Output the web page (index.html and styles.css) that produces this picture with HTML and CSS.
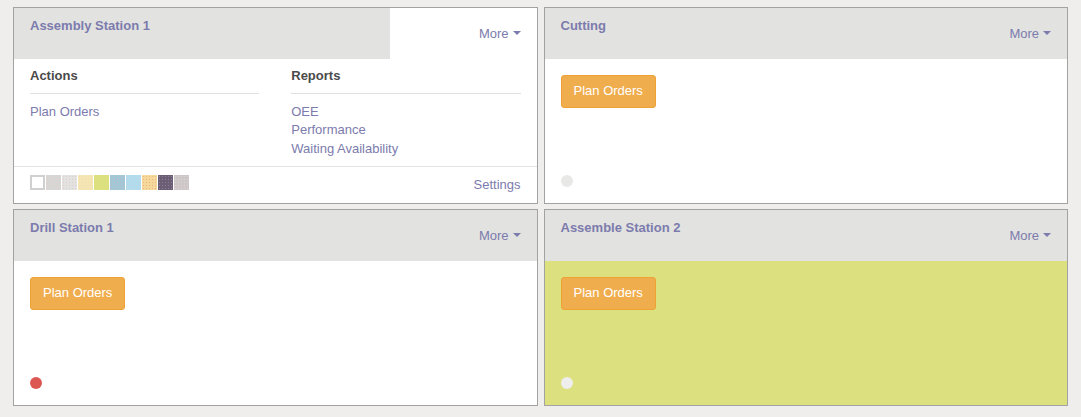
FILE: index.html
```html
<!DOCTYPE html>
<html lang="en">

<head>
    <meta charset="UTF-8">
    <meta name="viewport" content="width=device-width, initial-scale=1.0">
    <title>Manufacturing Dashboard</title>
    <link rel="stylesheet" href="styles.css">
</head>

<body>
    <main class="dashboard">
        <div class="card card-open">
            <div class="card-header">
                <div class="card-title">Assembly Station 1</div>
                <a class="more-toggle">More<span class="caret"></span></a>
            </div>
            <div class="manage-pane">
                <div class="manage-section">
                    <div class="manage-title">Actions</div>
                    <a>Plan Orders</a>
                </div>
                <div class="manage-section">
                    <div class="manage-title">Reports</div>
                    <a>OEE</a>
                    <a>Performance</a>
                    <a>Waiting Availability</a>
                </div>
            </div>
            <div class="manage-footer">
                <ul class="colorpicker">
                    <li class="color-0"></li>
                    <li class="color-1"></li>
                    <li class="color-2"></li>
                    <li class="color-3"></li>
                    <li class="color-4"></li>
                    <li class="color-5"></li>
                    <li class="color-6"></li>
                    <li class="color-7"></li>
                    <li class="color-8"></li>
                    <li class="color-9"></li>
                </ul>
                <a class="settings-link">Settings</a>
            </div>
        </div>

        <div class="card">
            <div class="card-header">
                <div class="card-title">Cutting</div>
                <a class="more-toggle">More<span class="caret"></span></a>
            </div>
            <div class="card-body">
                <button class="btn-plan">Plan Orders</button>
                <span class="status-dot"></span>
            </div>
        </div>

        <div class="card">
            <div class="card-header">
                <div class="card-title">Drill Station 1</div>
                <a class="more-toggle">More<span class="caret"></span></a>
            </div>
            <div class="card-body">
                <button class="btn-plan">Plan Orders</button>
                <span class="status-dot blocked"></span>
            </div>
        </div>

        <div class="card card-yellow">
            <div class="card-header">
                <div class="card-title">Assemble Station 2</div>
                <a class="more-toggle">More<span class="caret"></span></a>
            </div>
            <div class="card-body">
                <button class="btn-plan">Plan Orders</button>
                <span class="status-dot"></span>
            </div>
        </div>
    </main>
</body>

</html>
```

FILE: styles.css
```css
body,
ul {
    margin: 0px;
    padding: 0px;
}

body {
    background: #efeeec;
    font-family: 'Liberation Sans', Arial, Helvetica, sans-serif;
    font-size: 13px;
    line-height: 1.42857;
    color: #4c4c4c;
}

a {
    color: #7c7bad;
    cursor: pointer;
}

.dashboard {
    display: grid;
    grid-template-columns: 1fr 1fr;
    gap: 5px 6px;
    padding: 7px 13px;
}

.card {
    height: 197px;
    box-sizing: border-box;
    border: 1px solid #a2a2a2;
    background: #fff;
    display: flex;
    flex-direction: column;
}

.card-header {
    display: flex;
    height: 51px;
    flex-shrink: 0;
    background: #e2e2e0;
}

.card-title {
    flex: 1;
    padding: 9px 16px 0px;
    font-weight: bold;
    color: #7c7bad;
}

.more-toggle {
    width: 147px;
    box-sizing: border-box;
    padding: 17px 16px 0px;
    text-align: right;
}

.card-open .more-toggle {
    background: #fff;
}

.caret {
    display: inline-block;
    margin-left: 4px;
    vertical-align: 3px;
    border-top: 4px solid;
    border-left: 4px solid transparent;
    border-right: 4px solid transparent;
}

.card-body {
    flex: 1;
    padding: 16px;
    display: flex;
    flex-direction: column;
    align-items: flex-start;
}

.card-yellow .card-body {
    background: #dde07f;
}

.btn-plan {
    padding: 6px 12px;
    border: 1px solid #eea236;
    border-radius: 3px;
    background: #f0ad4e;
    color: #fff;
    font: inherit;
    line-height: 1.42857;
}

.status-dot {
    margin-top: auto;
    width: 12px;
    height: 12px;
    border-radius: 50%;
    background: #e8e8e6;
}

.card-yellow .status-dot {
    background: #eeeeec;
}

.status-dot.blocked {
    background: #dc5753;
}

/* open "More" pane */
.manage-pane {
    flex: 1;
    display: flex;
    padding-top: 8px;
}

.manage-section {
    width: 50%;
    box-sizing: border-box;
    padding: 0px 16px;
}

.manage-title {
    font-weight: bold;
    color: #4a4a4a;
    padding-bottom: 7px;
    margin-bottom: 9px;
    border-bottom: 1px solid #e1e1e1;
}

.manage-section a {
    display: block;
}

.manage-footer {
    height: 37px;
    flex-shrink: 0;
    box-sizing: border-box;
    padding: 8px 16px 0px;
    border-top: 1px solid #e3e3e3;
    display: flex;
    justify-content: space-between;
    align-items: flex-start;
}

.settings-link {
    padding-top: 1px;
}

.colorpicker {
    list-style: none;
    display: flex;
    gap: 1px;
}

.colorpicker li {
    width: 15px;
    height: 15px;
    box-sizing: border-box;
    background-size: 3px 3px;
}

.color-0 {
    border: 2px solid #d0d0d0;
    background: #fff;
}

.color-1 {
    background-color: #d6d6d4;
    background-image: radial-gradient(circle, rgba(240, 200, 200, 0.6) 0.7px, transparent 1px);
}

.color-2 {
    background-color: #e2e2e0;
    background-image: radial-gradient(circle, rgba(230, 190, 190, 0.6) 0.7px, transparent 1px);
}

.color-3 {
    background-color: #f3e5b4;
    background-image: radial-gradient(circle, rgba(250, 215, 160, 0.6) 0.7px, transparent 1px);
}

.color-4 {
    background-color: #dce07e;
}

.color-5 {
    background-color: #a2c8d6;
    background-image: radial-gradient(circle, rgba(200, 170, 200, 0.6) 0.7px, transparent 1px);
}

.color-6 {
    background-color: #b1dcec;
    background-image: radial-gradient(circle, rgba(205, 200, 230, 0.6) 0.7px, transparent 1px);
}

.color-7 {
    background-color: #f4d99a;
    background-image: radial-gradient(circle, rgba(235, 150, 130, 0.6) 0.7px, transparent 1px);
}

.color-8 {
    background-color: #6b5d72;
    background-image: radial-gradient(circle, rgba(150, 130, 180, 0.8) 0.7px, transparent 1px);
}

.color-9 {
    background-color: #cdc7c7;
    background-image: radial-gradient(circle, rgba(230, 215, 215, 0.7) 0.7px, transparent 1px);
}
```
